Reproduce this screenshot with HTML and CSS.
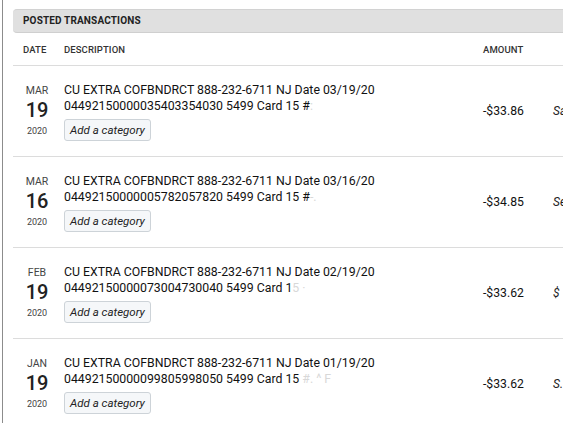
FILE: index.html
```html
<!DOCTYPE html>
<html>
<head>
<meta charset="utf-8">
<link rel="stylesheet" href="styles.css">
</head>
<body>
<div class="frame">
  <div class="panel">
    <div class="bar">POSTED TRANSACTIONS</div>
    <div class="row head">
      <div class="c-date">DATE</div>
      <div class="c-desc">DESCRIPTION</div>
      <div class="c-amt">AMOUNT</div>
      <div class="c-cat"></div>
    </div>

    <div class="row tx">
      <div class="c-date date"><span class="mon">MAR</span><span class="day">19</span><span class="yr">2020</span></div>
      <div class="c-desc">
        <div class="desc">CU EXTRA COFBNDRCT 888-232-6711 NJ Date 03/19/20<br>04492150000035403354030 5499 Card 15 #<span class="red">:</span></div>
        <button class="cat">Add a category</button>
      </div>
      <div class="c-amt amt">-$33.86</div>
      <div class="c-cat link">Sa</div>
    </div>

    <div class="row tx">
      <div class="c-date date"><span class="mon">MAR</span><span class="day">16</span><span class="yr">2020</span></div>
      <div class="c-desc">
        <div class="desc">CU EXTRA COFBNDRCT 888-232-6711 NJ Date 03/16/20<br>04492150000005782057820 5499 Card 15 #<span class="red">-.</span></div>
        <button class="cat">Add a category</button>
      </div>
      <div class="c-amt amt">-$34.85</div>
      <div class="c-cat link">Se</div>
    </div>

    <div class="row tx">
      <div class="c-date date"><span class="mon">FEB</span><span class="day">19</span><span class="yr">2020</span></div>
      <div class="c-desc">
        <div class="desc">CU EXTRA COFBNDRCT 888-232-6711 NJ Date 02/19/20<br>04492150000073004730040 5499 Card 1<span class="red">5 ·</span></div>
        <button class="cat">Add a category</button>
      </div>
      <div class="c-amt amt">-$33.62</div>
      <div class="c-cat link">$</div>
    </div>

    <div class="row tx">
      <div class="c-date date"><span class="mon">JAN</span><span class="day">19</span><span class="yr">2020</span></div>
      <div class="c-desc">
        <div class="desc">CU EXTRA COFBNDRCT 888-232-6711 NJ Date 01/19/20<br>04492150000099805998050 5499 Card 15 <span class="red">#.  ^ F</span></div>
        <button class="cat">Add a category</button>
      </div>
      <div class="c-amt amt">-$33.62</div>
      <div class="c-cat link">S.</div>
    </div>
  </div>
</div>
</body>
</html>
```
FILE: styles.css
```css
html, body {
  margin: 0;
  padding: 0;
  background: #fff;
  overflow: hidden;
}
body {
  font-family: Roboto, "Liberation Sans", sans-serif;
  color: #1a1a1a;
  width: 563px;
  height: 423px;
}
.frame {
  margin-left: 2px;
  border-left: 1px solid #8c8c8c;
  padding-left: 10px;
  padding-top: 9px;
  height: 423px;
  box-sizing: border-box;
}
.panel {
  width: 640px;
}
.bar {
  background: #e0e0e0;
  border-top: 1px solid #d2d2d2;
  border-bottom: 1px solid #cfcfcf;
  border-radius: 4px 0 0 4px;
  height: 22px;
  line-height: 22px;
  padding-left: 10px;
  font-size: 10px;
  font-weight: 700;
  letter-spacing: 0.15px;
  color: #222;
}
.row {
  display: grid;
  grid-template-columns: 41px 419px 70px 1fr;
  padding-left: 10px;
  border-bottom: 1px solid #dcdcdc;
}
.head {
  height: 32px;
  align-items: center;
  font-size: 9.5px;
  font-weight: 500;
  letter-spacing: 0.1px;
  color: #333;
}
.tx {
  height: 90px;
  box-sizing: content-box;
}
.tx .c-desc {
  padding-top: 16px;
}
.date {
  width: 28px;
  display: flex;
  flex-direction: column;
  align-items: center;
  padding-top: 19px;
}
.mon {
  font-size: 10.5px;
  line-height: 12px;
  color: #444;
}
.day {
  font-size: 20px;
  font-weight: 500;
  line-height: 26px;
  color: #222;
}
.yr {
  font-size: 9px;
  line-height: 14px;
  margin-top: 1px;
  color: #444;
}
.desc {
  font-size: 12.3px;
  line-height: 16px;
  font-weight: 400;
  color: #111;
}
.red {
  color: #d8d8d8;
}
.cat {
  display: block;
  margin-top: 5px;
  height: 22px;
  padding: 0 5px;
  border: 1px solid #cdd3d8;
  border-radius: 3px;
  background: #f5f7f9;
  font-family: Roboto, "Liberation Sans", sans-serif;
  font-style: italic;
  font-size: 11.5px;
  color: #222;
}
.amt {
  align-self: center;
  font-size: 12.2px;
  color: #111;
}
.link {
  align-self: center;
  font-style: italic;
  font-size: 12px;
  color: #222;
}
```
